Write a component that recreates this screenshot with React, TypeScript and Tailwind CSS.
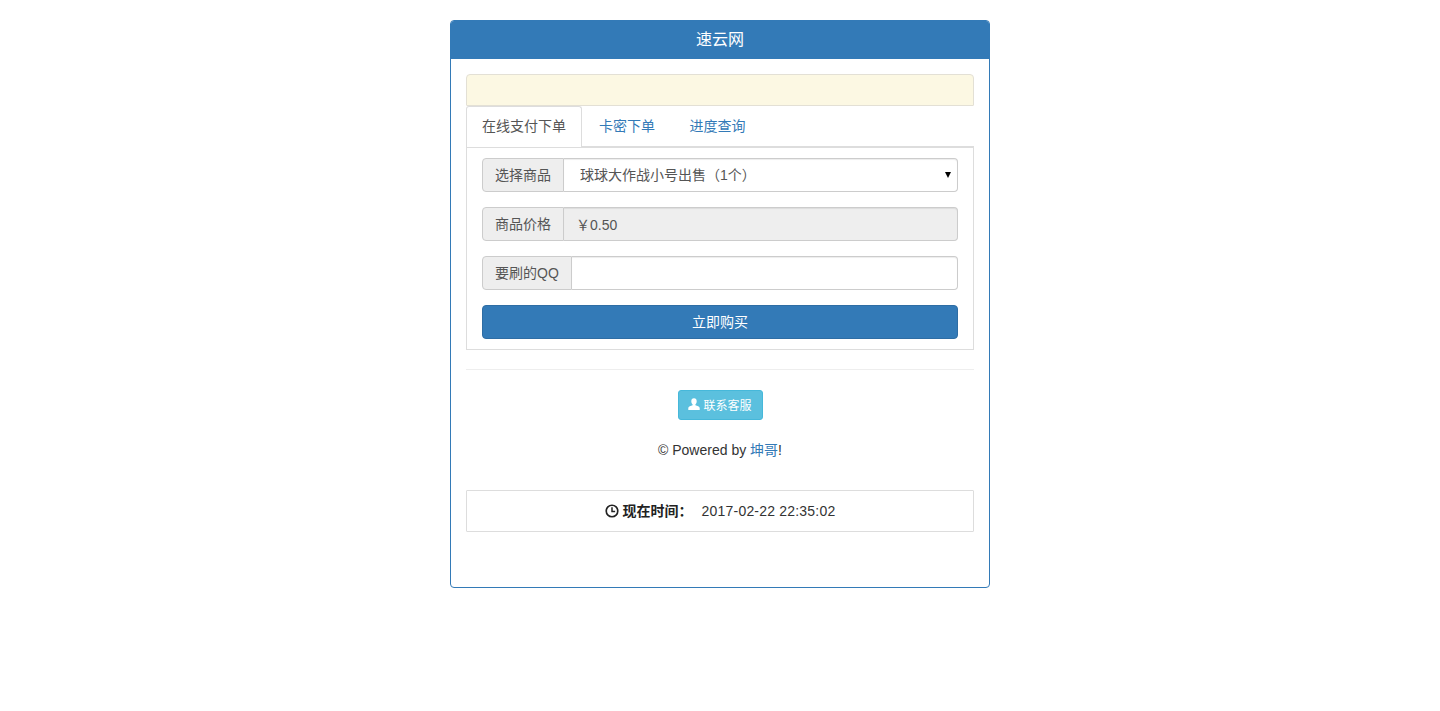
import React from "react";

function Addon({ children, w }: { children: React.ReactNode; w: string }) {
  return (
    <span className={`${w} flex h-[34px] shrink-0 items-center justify-center rounded-l-[4px] border border-[#ccc] bg-[#eee] text-[14px] text-[#555]`}>
      {children}
    </span>
  );
}

export default function App() {
  return (
    <div className="min-h-[711px] bg-white pt-5 font-['Liberation_Sans','Noto_Sans_CJK_SC',sans-serif] text-[14px] leading-[20px] text-[#333]">
      <div className="mx-auto h-[568px] w-[540px] rounded-[4px] border border-[#337ab7] bg-white">
        <div className="flex h-[38px] items-center justify-center rounded-t-[3px] bg-[#337ab7] text-[16px] text-white">速云网</div>
        <div className="px-[15px] pt-[15px]">
          <div className="h-[32px] rounded-t-[4px] rounded-b-[1px] border border-[#e3e0d5] bg-[#fcf8e3]" />
          <div className="flex h-[42px] border-b border-[#ddd]">
            <div className="flex h-[41px] w-[116px] items-center justify-center rounded-t-[3px] border border-b-0 border-[#ddd] bg-white pb-[2px] text-[#555]">在线支付下单</div>
            <div className="flex h-[41px] flex-1 border-b border-[#ddd]">
              <a className="flex h-[40px] w-[90px] items-center justify-center text-[#337ab7]">卡密下单</a>
              <a className="flex h-[40px] w-[91px] items-center justify-center text-[#337ab7]">进度查询</a>
            </div>
          </div>
          <div className="flex h-[202px] flex-col gap-[15px] border border-t-0 border-[#ddd] px-[15px] pt-[10px]">
            <div className="flex">
              <Addon w="w-[82px]">选择商品</Addon>
              <div className="relative min-w-0 flex-1">
                <select className="block h-[34px] w-full appearance-none rounded-r-[4px] border border-l-0 border-[#ccc] bg-white px-[16px] text-[14px] text-[#555] shadow-[inset_0_1px_1px_rgba(0,0,0,0.075)]">
                  <option>球球大作战小号出售（1个）</option>
                </select>
                <svg viewBox="0 0 6 6" className="pointer-events-none absolute right-[7px] top-[14px] h-[6px] w-[6px] fill-black">
                  <path d="M0 0H6L3 6Z" />
                </svg>
              </div>
            </div>
            <div className="flex">
              <Addon w="w-[82px]">商品价格</Addon>
              <input readOnly value="￥0.50" className="h-[34px] min-w-0 flex-1 rounded-r-[4px] border border-l-0 border-[#ccc] bg-[#eee] px-[12px] text-[14px] text-[#555] shadow-[inset_0_1px_1px_rgba(0,0,0,0.075)]" />
            </div>
            <div className="flex">
              <Addon w="w-[90px]">要刷的QQ</Addon>
              <input className="h-[34px] min-w-0 flex-1 rounded-r-[4px] border border-l-0 border-[#ccc] bg-white px-[12px] text-[14px] text-[#555] shadow-[inset_0_1px_1px_rgba(0,0,0,0.075)]" />
            </div>
            <button className="h-[34px] rounded-[4px] border border-[#2e6da4] bg-[#337ab7] text-[14px] text-white">立即购买</button>
          </div>
          <div className="mt-[19px] border-t border-[#eee]" />
          <div className="mt-5 flex justify-center">
            <a className="flex h-[30px] w-[85px] items-center justify-center rounded-[3px] border border-[#46b8da] bg-[#5bc0de] text-[12px] leading-[18px] text-white">
              <svg viewBox="0 0 16 16" className="mb-[2px] mr-[3px] h-[12px] w-[12px] fill-white">
                <path d="M8 0.3c-2.4 0-3.6 1.8-3.6 3.9 0 1.6.6 3.2 1.7 4.2v1.4C3.8 10.6.4 11.5.4 13.4V16h15.2v-2.6c0-1.9-3.4-2.8-5.7-3.6V8.4c1.1-1 1.7-2.6 1.7-4.2C11.6 2.1 10.4.3 8 .3z" />
              </svg>
              <span className="pt-[1px]">联系客服</span>
            </a>
          </div>
          <p className="mt-5 text-center">
            © Powered by <a className="text-[#337ab7]">坤哥</a>!
          </p>
          <div className="mt-[30px] flex h-[42px] items-center justify-center rounded-[1px] border border-[#ddd] bg-white">
            <svg viewBox="0 0 16 16" className="mr-[4px] h-[14px] w-[14px] fill-none stroke-[#222]" strokeWidth="1.9">
              <circle cx="8" cy="8" r="6.6" />
              <path d="M8 3.8V8.6H11.6" strokeWidth="1.7" />
            </svg>
            <b className="font-bold text-[#222]">现在时间：</b>
            <span className="ml-[9px] tracking-[0.2px]">2017-02-22 22:35:02</span>
          </div>
        </div>
      </div>
    </div>
  );
}
